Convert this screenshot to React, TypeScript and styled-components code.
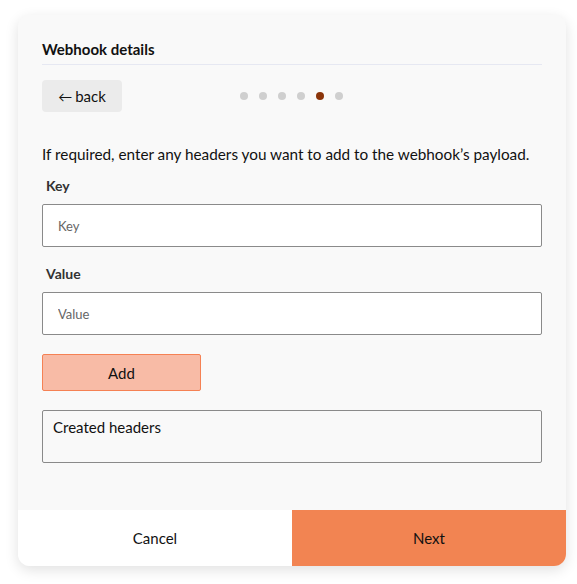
import { useState } from "react";
import styled, { createGlobalStyle } from "styled-components";

const GlobalStyle = createGlobalStyle`
  body {
    margin: 0;
    background: #ffffff;
    font-family: Lato, "Noto Sans", sans-serif;
    color: #111;
  }
`;

const steps = [0, 1, 2, 3, 4, 5];
const activeStep = 4;

export default function App() {
  const [key, setKey] = useState("");
  const [value, setValue] = useState("");

  return (
    <Page>
      <GlobalStyle />
      <Card>
        <Body>
          <Title>Webhook details</Title>
          <NavRow>
            <BackButton type="button">
              <span>←</span>back
            </BackButton>
            <Dots>
              {steps.map((s) => (
                <Dot key={s} $active={s === activeStep} />
              ))}
            </Dots>
          </NavRow>
          <Intro>
            If required, enter any headers you want to add to the webhook’s payload.
          </Intro>
          <Field>
            <Label>Key</Label>
            <TextInput
              placeholder="Key"
              value={key}
              onChange={(e) => setKey(e.target.value)}
            />
          </Field>
          <Field>
            <Label>Value</Label>
            <TextInput
              placeholder="Value"
              value={value}
              onChange={(e) => setValue(e.target.value)}
            />
          </Field>
          <AddButton type="button">Add</AddButton>
          <HeadersBox>Created headers</HeadersBox>
        </Body>
        <Footer>
          <FooterButton type="button">Cancel</FooterButton>
          <FooterButton type="button" $primary>
            Next
          </FooterButton>
        </Footer>
      </Card>
    </Page>
  );
}

const Page = styled.div`
  padding: 15px 11px 18px 18px;
`;

const Card = styled.div`
  width: 548px;
  height: 551px;
  background: #f9f9f9;
  border-radius: 12px;
  box-shadow: 0 4px 14px rgba(0, 0, 0, 0.12);
  overflow: hidden;
  display: flex;
  flex-direction: column;
`;

const Body = styled.div`
  flex: 1;
  padding: 24px 24px 0 24px;
  display: flex;
  flex-direction: column;
`;

const Title = styled.h2`
  margin: 0;
  font-size: 15px;
  font-weight: 700;
  line-height: 20px;
  padding-bottom: 5px;
  border-bottom: 1px solid #e6e8f2;
`;

const NavRow = styled.div`
  margin-top: 15px;
  display: flex;
  align-items: center;
`;

const BackButton = styled.button`
  width: 80px;
  height: 32px;
  border: none;
  border-radius: 4px;
  background: #ebebeb;
  font-family: inherit;
  font-size: 15px;
  color: #111;
  display: flex;
  align-items: center;
  justify-content: center;
  gap: 3px;
  cursor: pointer;
  span {
    font-size: 14px;
  }
`;

const Dots = styled.div`
  margin-left: 118px;
  display: flex;
  gap: 11px;
`;

const Dot = styled.span<{ $active?: boolean }>`
  width: 8px;
  height: 8px;
  border-radius: 50%;
  background: ${(p) => (p.$active ? "#8a3409" : "#cfcfcf")};
`;

const Intro = styled.p`
  margin: 33px 0 0;
  font-size: 15.3px;
  line-height: 18px;
`;

const Field = styled.div`
  margin-top: 14px;
  display: flex;
  flex-direction: column;
  & + & {
    margin-top: 18px;
  }
`;

const Label = styled.label`
  margin-left: 4px;
  font-size: 14px;
  font-weight: 700;
  color: #333;
  line-height: 18px;
  margin-bottom: 9px;
`;

const TextInput = styled.input`
  box-sizing: border-box;
  width: 100%;
  height: 43px;
  border: 1px solid #8a8a8a;
  border-radius: 2px;
  background: #fff;
  padding: 0 15px;
  font-family: inherit;
  font-size: 13px;
  color: #222;
  outline: none;
  &::placeholder {
    color: #666;
  }
`;

const AddButton = styled.button`
  margin-top: 19px;
  width: 159px;
  height: 37px;
  border: 1px solid #f58154;
  border-radius: 2px;
  background: #f8bba6;
  font-family: inherit;
  font-size: 15px;
  color: #111;
  cursor: pointer;
`;

const HeadersBox = styled.div`
  box-sizing: border-box;
  margin-top: 19px;
  height: 53px;
  border: 1px solid #8a8a8a;
  border-radius: 2px;
  padding: 7px 10px;
  font-size: 15px;
  line-height: 18px;
`;

const Footer = styled.div`
  display: grid;
  grid-template-columns: 1fr 1fr;
  height: 56px;
`;

const FooterButton = styled.button<{ $primary?: boolean }>`
  border: none;
  background: ${(p) => (p.$primary ? "#f28452" : "#ffffff")};
  font-family: inherit;
  font-size: 15px;
  color: #111;
  cursor: pointer;
`;
